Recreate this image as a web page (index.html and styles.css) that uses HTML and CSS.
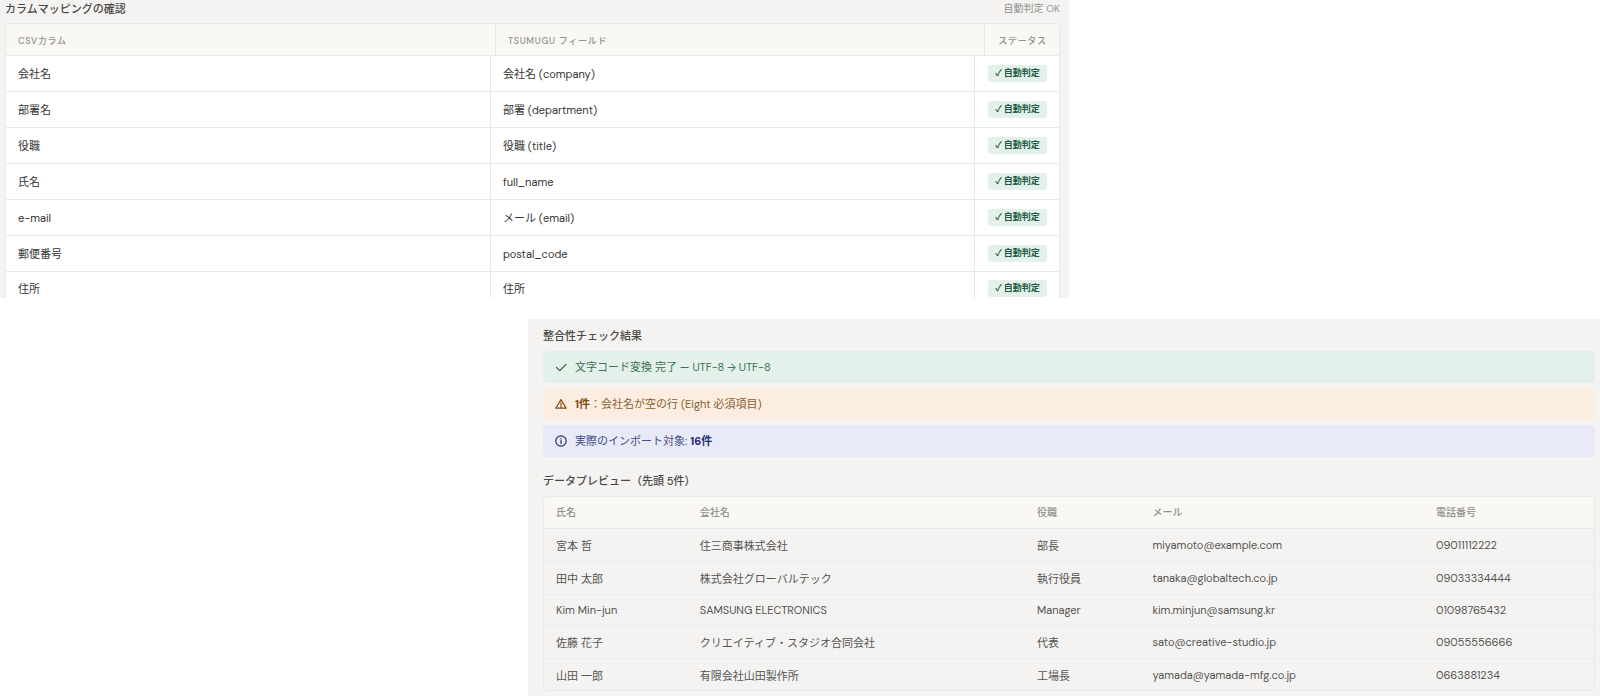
FILE: index.html
```html
<!DOCTYPE html>
<html lang="ja">
<head>
<meta charset="utf-8">
<meta name="viewport" content="width=device-width, initial-scale=1">
<title>カラムマッピングの確認</title>
<link rel="stylesheet" href="styles.css">
</head>
<body>
<main class="page">
  <section class="panel panel-mapping">
    <header class="mapping-head">
      <h2 class="title">カラムマッピングの確認</h2>
      <span class="summary">自動判定 OK</span>
    </header>
    <table class="mapping">
      <thead>
        <tr><th scope="col">CSVカラム</th><th scope="col">TSUMUGU フィールド</th><th scope="col">ステータス</th></tr>
      </thead>
      <tbody>
        <tr><td>会社名</td><td>会社名 (company)</td><td><span class="badge">✓ 自動判定</span></td></tr>
        <tr><td>部署名</td><td>部署 (department)</td><td><span class="badge">✓ 自動判定</span></td></tr>
        <tr><td>役職</td><td>役職 (title)</td><td><span class="badge">✓ 自動判定</span></td></tr>
        <tr><td>氏名</td><td>full_name</td><td><span class="badge">✓ 自動判定</span></td></tr>
        <tr><td>e-mail</td><td>メール (email)</td><td><span class="badge">✓ 自動判定</span></td></tr>
        <tr><td>郵便番号</td><td>postal_code</td><td><span class="badge">✓ 自動判定</span></td></tr>
        <tr><td>住所</td><td>住所</td><td><span class="badge">✓ 自動判定</span></td></tr>
      </tbody>
    </table>
  </section>

  <section class="panel panel-check">
    <h2 class="title">整合性チェック結果</h2>
    <div class="alerts">
      <div class="alert alert-ok">
        <svg class="icon" viewBox="0 0 12 12" aria-hidden="true"><path d="M1.4 6.4 4.8 9.6 11 3.4"/></svg>
        <p>文字コード変換 完了 — UTF-8 → UTF-8</p>
      </div>
      <div class="alert alert-warn">
        <svg class="icon" viewBox="0 0 12 12" aria-hidden="true"><path d="M6 1.6 11.2 10.2H.8ZM6 4.8v2.4M6 8.3v.6"/></svg>
        <p><strong>1件</strong>：会社名が空の行 (Eight 必須項目)</p>
      </div>
      <div class="alert alert-info">
        <svg class="icon" viewBox="0 0 12 12" aria-hidden="true"><circle cx="6" cy="6" r="5.2"/><path d="M6 5.6v2.8M6 3.6v.4"/></svg>
        <p>実際のインポート対象: <strong>16件</strong></p>
      </div>
    </div>
    <h2 class="title">データプレビュー（先頭 5件）</h2>
    <div class="preview-frame">
      <table class="preview">
        <colgroup><col class="col-name"><col class="col-company"><col class="col-role"><col class="col-mail"><col></colgroup>
        <thead>
          <tr><th scope="col">氏名</th><th scope="col">会社名</th><th scope="col">役職</th><th scope="col">メール</th><th scope="col">電話番号</th></tr>
        </thead>
        <tbody>
          <tr><td>宮本 哲</td><td>住三商事株式会社</td><td>部長</td><td>miyamoto@example.com</td><td>09011112222</td></tr>
          <tr><td>田中 太郎</td><td>株式会社グローバルテック</td><td>執行役員</td><td>tanaka@globaltech.co.jp</td><td>09033334444</td></tr>
          <tr><td>Kim Min-jun</td><td>SAMSUNG ELECTRONICS</td><td>Manager</td><td>kim.minjun@samsung.kr</td><td>01098765432</td></tr>
          <tr><td>佐藤 花子</td><td>クリエイティブ・スタジオ合同会社</td><td>代表</td><td>sato@creative-studio.jp</td><td>09055556666</td></tr>
          <tr><td>山田 一郎</td><td>有限会社山田製作所</td><td>工場長</td><td>yamada@yamada-mfg.co.jp</td><td>0663881234</td></tr>
        </tbody>
      </table>
    </div>
  </section>
</main>
</body>
</html>
```
FILE: styles.css
```css
:root {
  --panel: #f4f3f1;
  --head: #f9f8f4;
  --line: #e9e8e5;
  --ink: #353533;
  --ink-soft: #555451;
  --muted: #92918c;
}

* {
  box-sizing: border-box;
}

body {
  margin: 0;
  background: #fff;
  color: var(--ink);
  font-family: "DM Sans", "Open Sans", "Noto Sans CJK JP", sans-serif;
  font-size: 11px;
  line-height: 16px;
}

.page {
  display: flex;
  flex-direction: column;
  gap: 21px;
  min-height: 100vh;
}

.panel {
  background: var(--panel);
}

.panel-mapping {
  width: 66.8%;
  padding: 0 9px 0 5px;
}

.panel-check {
  flex: 1;
  width: 67%;
  margin-left: auto;
  padding: 9px 5px 5px 15px;
}

.title {
  margin: 0;
  color: #4a4946;
  font-size: 11px;
  font-weight: 500;
  line-height: 16px;
}

.mapping-head {
  display: flex;
  justify-content: space-between;
  align-items: center;
  padding: 1px 0 6px;
}

.summary {
  color: var(--muted);
  font-size: 10px;
}

/* Column mapping */
.mapping {
  display: block;
  border: 1px solid var(--line);
  border-bottom: 0;
  border-radius: 5px 5px 0 0;
  background: #fff;
  overflow: hidden;
}

.mapping thead,
.mapping tbody {
  display: block;
}

.mapping tr {
  display: grid;
  grid-template-columns: 1fr 1fr 85px;
  border-bottom: 1px solid var(--line);
}

.mapping thead tr {
  grid-template-columns: 1fr 1fr 75px;
  background: var(--head);
}

.mapping th,
.mapping td {
  display: flex;
  align-items: center;
  padding: 9px 12px;
}

.mapping th {
  padding: 9px 12px 6px;
  color: var(--muted);
  font-size: 9px;
  font-weight: 500;
  letter-spacing: 0.08em;
  white-space: nowrap;
}

.mapping th + th,
.mapping td + td {
  border-left: 1px solid var(--line);
}

.mapping th:last-child,
.mapping td:last-child {
  justify-content: flex-end;
}

.mapping tbody tr:last-child {
  border-bottom: 0;
}

.mapping tbody tr:last-child td {
  padding: 8px 12px 1px;
}

.badge {
  padding: 0 7px;
  border-radius: 3px;
  background: #e4f1eb;
  color: #1d5a41;
  font-size: 9px;
  font-weight: 700;
  line-height: 17px;
  white-space: nowrap;
}

/* Check results */
.alerts {
  display: flex;
  flex-direction: column;
  gap: 5px;
  margin: 7px 0 16px;
}

.alert {
  display: flex;
  align-items: center;
  gap: 8px;
  padding: 8px 12px;
  border-radius: 4px;
}

.alert p {
  margin: 0;
}

.alert strong {
  font-weight: 700;
}

.alert-ok {
  background: #e4f1eb;
  color: #3d7059;
}

.alert-ok .icon {
  color: #1d5a41;
}

.alert-warn {
  background: #fbeee0;
  color: #87602f;
}

.alert-warn .icon,
.alert-warn strong {
  color: #80490f;
}

.alert-info {
  background: #e8ebf7;
  color: #444c88;
}

.alert-info .icon,
.alert-info strong {
  color: #232c70;
}

.icon {
  width: 12px;
  height: 12px;
  fill: none;
  stroke: currentColor;
  stroke-width: 1.2;
  stroke-linecap: round;
  stroke-linejoin: round;
}

/* Data preview */
.preview-frame {
  margin-top: 7px;
  border: 1px solid var(--line);
  border-radius: 5px;
  overflow: hidden;
}

.preview {
  width: 100%;
  border-collapse: collapse;
  table-layout: fixed;
}

.col-name {
  width: 13.7%;
}

.col-company {
  width: 32.1%;
}

.col-role {
  width: 11%;
}

.col-mail {
  width: 27%;
}

.preview th,
.preview td {
  padding: 8px 12px;
  border-bottom: 1px solid #ecebe8;
  text-align: left;
}

.preview th {
  padding: 8px 12px 7px;
  background: var(--head);
  border-bottom-color: var(--line);
  color: var(--muted);
  font-size: 10px;
  font-weight: 500;
}

.preview td {
  color: var(--ink-soft);
  line-height: normal;
}

.preview tr:last-child td {
  padding-bottom: 7px;
  border-bottom: 0;
}
```
